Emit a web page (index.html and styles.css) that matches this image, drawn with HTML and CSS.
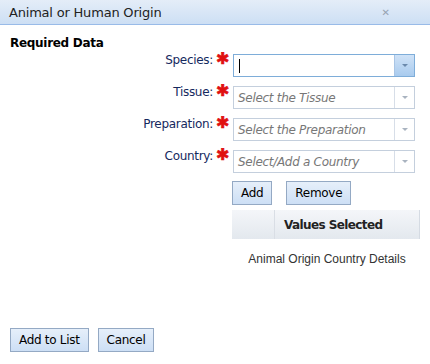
FILE: index.html
```html
<!DOCTYPE html>
<html lang="en">
<head>
<meta charset="UTF-8">
<title>Animal or Human Origin</title>
<link rel="stylesheet" href="styles.css">
</head>
<body>
<div class="window">
    <div class="header">
        <span class="title">Animal or Human Origin</span>
        <span class="close">&#x2715;</span>
    </div>
    <div class="body">
        <h2>Required Data</h2>
        <div class="form">
            <div class="row">
                <label>Species:</label><span class="req">&#x2731;</span>
                <div class="combo focus"><span class="caret"></span><span class="trigger"><i></i></span></div>
            </div>
            <div class="row">
                <label>Tissue:</label><span class="req">&#x2731;</span>
                <div class="combo"><span class="ph">Select the Tissue</span><span class="trigger"><i></i></span></div>
            </div>
            <div class="row">
                <label>Preparation:</label><span class="req">&#x2731;</span>
                <div class="combo"><span class="ph">Select the Preparation</span><span class="trigger"><i></i></span></div>
            </div>
            <div class="row">
                <label>Country:</label><span class="req">&#x2731;</span>
                <div class="combo"><span class="ph">Select/Add a Country</span><span class="trigger"><i></i></span></div>
            </div>
            <div class="side">
                <div class="btns">
                    <button>Add</button>
                    <button>Remove</button>
                </div>
                <div class="grid-head">
                    <div class="col-a"></div>
                    <div class="col-b">Values Selected</div>
                </div>
                <div class="grid-empty">Animal Origin Country Details</div>
            </div>
        </div>
    </div>
    <div class="footer">
        <button>Add to List</button>
        <button>Cancel</button>
    </div>
</div>
</body>
</html>
```

FILE: styles.css
```css
* { margin:0; padding:0; box-sizing:border-box; }
body {
    font-family: 'DejaVu Sans', Verdana, sans-serif;
    font-size: 12px;
    background: #fff;
    width: 430px;
    height: 364px;
    overflow: hidden;
}
.window { display: flex; flex-direction: column; height: 364px; }
.header {
    height: 25px;
    background: linear-gradient(#e4edf8, #cddff4);
    border-bottom: 1px solid #99bbe8;
    display: flex;
    align-items: center;
    justify-content: space-between;
    padding: 0 40px 0 9px;
}
.title { font-size: 13px; color: #222; letter-spacing: -0.2px; }
.close { font-size: 10px; color: #97a3b2; font-weight: bold; }
.body { flex: 1; padding: 11px 0 0 10px; }
h2 { font-size: 12px; font-weight: bold; color: #000; letter-spacing: -0.3px; }
.form { display: flex; flex-direction: column; gap: 9px; margin-top: 4px; }
.row { display: flex; align-items: flex-start; height: 23px; }
.row label {
    width: 203px;
    text-align: right;
    color: #15295e;
    letter-spacing: -0.3px;
    margin-top: -1px;
}
.req {
    color: #e01010;
    font-size: 16px;
    width: 20px;
    padding-left: 3px;
    line-height: 1;
    margin-top: -3px;
    -webkit-text-stroke: 0.6px #e01010;
}
.combo {
    width: 182px;
    height: 23px;
    border: 1px solid #c4cfdd;
    background: #fff;
    display: flex;
    align-items: center;
    justify-content: space-between;
}
.combo.focus { border-color: #7eadd9; }
.ph { font-style: italic; color: #777; padding-left: 4px; letter-spacing: -0.3px; }
.caret { width: 1px; height: 14px; background: #000; margin-left: 5px; }
.trigger {
    width: 20px;
    height: 100%;
    border-left: 1px solid #d7dee8;
    display: flex;
    align-items: center;
    justify-content: center;
}
.focus .trigger { background: linear-gradient(#cfe2f7, #a9cbee); border-left-color: #a9c5e5; }
.trigger i {
    width: 0; height: 0;
    border-left: 3px solid transparent;
    border-right: 3px solid transparent;
    border-top: 3px solid #a9b3c0;
}
.focus .trigger i { border-top-color: #6b89ac; }
.side { padding-left: 222px; margin-top: -1px; }
.btns { display: flex; gap: 14px; }
button {
    font-family: 'DejaVu Sans', Verdana, sans-serif;
    font-size: 12px;
    color: #000;
    height: 24px;
    padding: 0 8px;
    border: 1px solid #94a9c4;
    background: linear-gradient(#e6effa, #cddff5);
    letter-spacing: -0.3px;
}
.grid-head {
    display: flex;
    height: 29px;
    width: 188px;
    margin-top: 5px;
    background: linear-gradient(#f4f6f9, #e3e8ee);
    border-right: 1px solid #d5dbe3;
}
.col-a { width: 43px; border-right: 1px solid #d9dee5; }
.col-b {
    flex: 1;
    display: flex;
    align-items: center;
    padding-left: 9px;
    font-weight: bold;
    color: #222;
    letter-spacing: -0.6px;
}
.grid-empty {
    width: 190px;
    text-align: center;
    font-family: 'Liberation Sans', Arial, sans-serif;
    font-size: 12px;
    color: #333;
    margin-top: 13px;
}
.footer { display: flex; gap: 9px; padding: 0 0 12px 10px; }
```
